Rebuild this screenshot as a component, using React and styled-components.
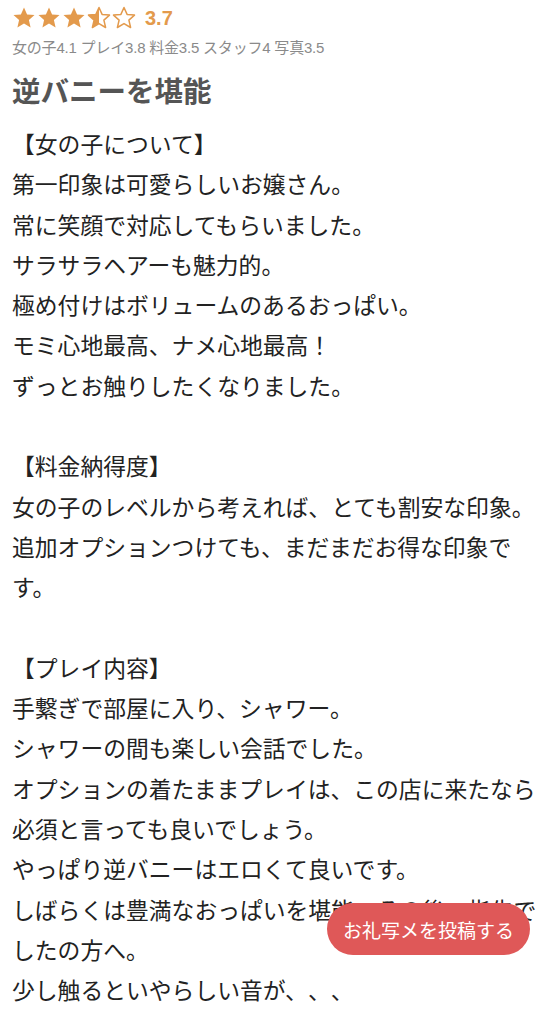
import React from "react";
import styled, { createGlobalStyle } from "styled-components";

const GlobalStyle = createGlobalStyle`
  html, body {
    margin: 0;
    padding: 0;
    background: #fff;
  }
  body {
    font-family: "Noto Sans CJK JP", sans-serif;
    color: #222;
    text-spacing-trim: space-all;
  }
`;

const Page = styled.div`
  padding: 5px 16px 20px 12px;
`;

const RatingRow = styled.div`
  display: flex;
  align-items: center;
  gap: 1px;
  height: 26px;
`;

const Score = styled.span`
  margin-left: 8px;
  font-family: "Liberation Sans", "Noto Sans CJK JP", sans-serif;
  font-weight: 700;
  font-size: 20px;
  color: #e39a4c;
`;

const SubScores = styled.div`
  margin-top: 5px;
  font-family: "Liberation Sans", "Noto Sans CJK JP", sans-serif;
  font-size: 15px;
  color: #8a8a8a;
  letter-spacing: -0.2px;
`;

const Title = styled.h1`
  margin: 13px 0 14px;
  font-size: 28.5px;
  line-height: 40px;
  font-weight: 700;
  color: #555;
`;

const Body = styled.div`
  font-size: 22.8px;
  line-height: 40.3px;
  white-space: pre-wrap;
  word-break: break-all;
  text-spacing-trim: space-all;
`;

const PostButton = styled.button`
  position: fixed;
  right: 30px;
  bottom: 69px;
  height: 52px;
  padding: 0 16px;
  border: none;
  border-radius: 26px;
  background: #df5858;
  color: #fff;
  font-family: "Noto Sans CJK JP", sans-serif;
  font-size: 19px;
  cursor: pointer;
`;

const STAR = "M12 1.5l3.1 6.9 7.4.7-5.6 5 1.7 7.4L12 17.6 5.4 21.5l1.7-7.4-5.6-5 7.4-.7z";
const ORANGE = "#e39a4c";

const Star = ({ kind }) => (
  <svg width="24" height="24" viewBox="0 0 24 24">
    <defs>
      <clipPath id="half">
        <rect x="0" y="0" width="12" height="24" />
      </clipPath>
    </defs>
    {kind === "full" && <path d={STAR} fill={ORANGE} />}
    {kind === "half" && (
      <>
        <path d={STAR} fill={ORANGE} clipPath="url(#half)" />
        <path d={STAR} fill="none" stroke={ORANGE} strokeWidth="1.5" strokeLinejoin="round" />
      </>
    )}
    {kind === "empty" && (
      <path d={STAR} fill="none" stroke={ORANGE} strokeWidth="1.5" strokeLinejoin="round" />
    )}
  </svg>
);

const text = `【女の子について】
第一印象は可愛らしいお嬢さん。
常に笑顔で対応してもらいました。
サラサラヘアーも魅力的。
極め付けはボリュームのあるおっぱい。
モミ心地最高、ナメ心地最高！
ずっとお触りしたくなりました。

【料金納得度】
女の子のレベルから考えれば、とても割安な印象。
追加オプションつけても、まだまだお得な印象です。

【プレイ内容】
手繋ぎで部屋に入り、シャワー。
シャワーの間も楽しい会話でした。
オプションの着たままプレイは、この店に来たなら必須と言っても良いでしょう。
やっぱり逆バニーはエロくて良いです。
しばらくは豊満なおっぱいを堪能。その後、指先でしたの方へ。
少し触るといやらしい音が、、、`;

const App = () => (
  <>
    <GlobalStyle />
    <Page>
      <RatingRow>
        <Star kind="full" />
        <Star kind="full" />
        <Star kind="full" />
        <Star kind="half" />
        <Star kind="empty" />
        <Score>3.7</Score>
      </RatingRow>
      <SubScores>女の子4.1 プレイ3.8 料金3.5 スタッフ4 写真3.5</SubScores>
      <Title>逆バニーを堪能</Title>
      <Body>{text}</Body>
    </Page>
    <PostButton>お礼写メを投稿する</PostButton>
  </>
);

export default App;
